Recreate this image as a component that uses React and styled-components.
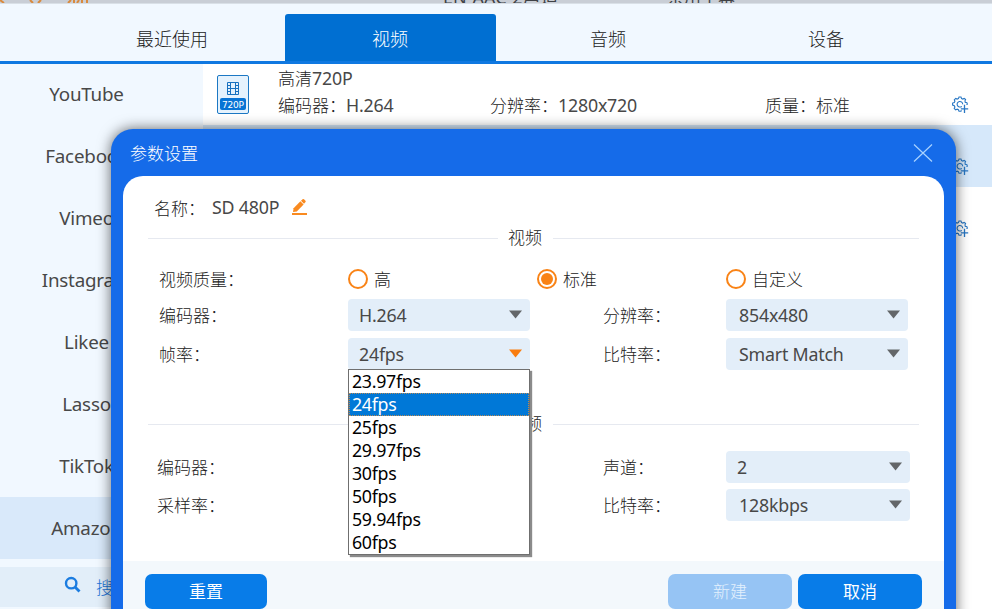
import React, { useState } from 'react';
import styled, { createGlobalStyle } from 'styled-components';

const GlobalStyle = createGlobalStyle`
  * {
    box-sizing: border-box;
  }

  body {
    margin: 0;
    font-family: 'Noto Sans', 'Noto Sans CJK SC', sans-serif;
    font-size: 17px;
    color: #484848;
  }

  button {
    font-family: inherit;
    border: none;
    padding: 0;
  }
`;

const Page = styled.div`
  position: relative;
  width: 992px;
  height: 609px;
  overflow: hidden;
  display: flex;
  flex-direction: column;
  background: #fff;
`;

const BackStrip = styled.div`
  display: flex;
  align-items: flex-end;
  height: 4px;
  overflow: hidden;
  background: #c9ced6;
  border-bottom: 1px solid #d9e0e7;
  color: #3f4246;
  flex-shrink: 0;

  svg {
    width: 443px;
    height: 3px;
    flex-shrink: 0;
  }
`;

const StripText = styled.span`
  width: ${props => props.$width}px;
  height: 3px;
  display: flex;
  align-items: flex-end;
  font-size: ${props => props.$size || 17}px;
  line-height: 12px;
  white-space: nowrap;
`;

const TabBar = styled.nav`
  display: grid;
  grid-template-columns: repeat(4, 218px);
  height: 60px;
  padding: 10px 0 0 63px;
  background: #f1f8ff;
  border-bottom: 3px solid #0f78e1;
  flex-shrink: 0;
`;

const Tab = styled.button`
  margin: 0 3px 0 4px;
  padding: 2px 1px 0 0;
  border-radius: 3px 3px 0 0;
  background: ${props => (props.$active ? '#006fd2' : 'transparent')};
  color: ${props => (props.$active ? '#fff' : '#222')};
  font-size: 18px;
  font-weight: 300;
  line-height: 20px;
`;

const Main = styled.div`
  display: flex;
  flex: 1;
  min-height: 0;
`;

const Sidebar = styled.aside`
  width: 203px;
  background: #f1f8ff;
  flex-shrink: 0;
`;

const SideItem = styled.div`
  display: flex;
  align-items: center;
  justify-content: center;
  height: 62px;
  padding: 0 30px 0 0;
  font-size: 18.8px;
  letter-spacing: -0.2px;
  line-height: 26px;
  background: ${props => (props.$active ? '#d9e9fa' : 'transparent')};

  &:first-child {
    height: 61px;
    padding-bottom: 1px;
  }
`;

const SearchBox = styled.div`
  display: flex;
  align-items: center;
  gap: 15px;
  height: 40px;
  margin-top: 8px;
  padding: 0 0 1px 64px;
  background: #e2eef9;
  color: #1b74d8;
  font-weight: 300;

  svg {
    margin-top: -4px;
  }
`;

const Formats = styled.div`
  flex: 1;
`;

const FormatRow = styled.div`
  display: flex;
  height: ${props => props.$height || 62}px;
  padding-left: 14px;
  background: ${props => (props.$active ? '#d6e8fa' : '#fff')};
`;

const FormatIcon = styled.svg`
  width: 32px;
  height: 39px;
  margin: 11px 29px 0 0;
`;

const FormatInfo = styled.div`
  width: 673px;
  padding-top: 1px;
  color: #222;
  font-weight: 300;
  line-height: 27px;
`;

const FormatDetails = styled.div`
  display: grid;
  grid-template-columns: 212px 275px 186px;
`;

const Latin = styled.span`
  color: #484848;
  font-size: 17.8px;
  font-weight: 400;
  letter-spacing: -0.2px;
  line-height: 20px;
`;

const GearSlot = styled.div`
  padding-top: ${props => props.$top}px;
`;

const Dialog = styled.section`
  position: absolute;
  left: 111px;
  top: 129px;
  width: 845px;
  height: 512px;
  padding: 0 12px 12px;
  border-radius: 22px;
  background: #156be9;
  box-shadow: 0 0 14px rgba(0, 0, 0, 0.6);
`;

const DialogHeader = styled.header`
  display: flex;
  align-items: center;
  justify-content: space-between;
  height: 47px;
  padding: 0 11px 0 7px;
  color: #fff;
  font-weight: 300;

  span {
    padding-bottom: 1px;
  }
`;

const DialogBody = styled.div`
  display: flex;
  flex-direction: column;
  height: 453px;
  padding-top: 10px;
  border-radius: 20px;
  overflow: hidden;
  background: #fff;
`;

const NameRow = styled.div`
  display: flex;
  align-items: center;
  height: 44px;
  padding: 0 0 2px 31px;

  svg {
    margin-left: 12px;
  }
`;

const NameLabel = styled.span`
  width: 58px;
  color: #222;
  font-weight: 300;
`;

const Divider = styled.div`
  display: flex;
  align-items: center;
  height: 16px;
  margin: ${props => props.$top || 0}px 25px 0;
  color: #222;
  font-weight: 300;
  line-height: 16px;

  &::before,
  &::after {
    content: '';
    width: 350px;
    height: 1px;
    margin-right: 10px;
    background: #e6e9f0;
  }

  &::after {
    flex: 1;
    margin: 0 0 0 11px;
  }
`;

const QualityRow = styled.div`
  display: grid;
  grid-template-columns: repeat(4, 189px);
  align-items: center;
  height: 30px;
  margin-top: 18px;
  padding-left: 36px;
`;

const Label = styled.span`
  padding-bottom: 2px;
  color: #222;
  font-weight: 300;
  white-space: nowrap;
`;

const RadioOption = styled.label`
  display: flex;
  align-items: center;
  gap: 6px;
  color: #222;
  font-weight: 300;
`;

const RadioMark = styled.span`
  display: flex;
  align-items: center;
  justify-content: center;
  width: 20px;
  height: 20px;
  border: 2px solid #f98316;
  border-radius: 50%;

  &::after {
    content: '';
    width: 12px;
    height: 12px;
    border-radius: 50%;
    background: ${props => (props.$checked ? '#f98316' : 'transparent')};
  }
`;

const RadioText = styled.span`
  padding-bottom: 1px;
`;

const FieldGrid = styled.div`
  display: grid;
  grid-template-columns: 189px 255px 123px ${props => props.$last}px;
  grid-auto-rows: 32px;
  row-gap: ${props => props.$gap}px;
  align-items: center;
  margin-top: ${props => props.$top}px;
  padding-left: 36px;

  ${Label}:nth-child(4n + 1) {
    margin-left: ${props => props.$shift || 0}px;
  }
`;

const SelectWrap = styled.div`
  position: relative;
  width: ${props => props.$width || 182}px;
`;

const SelectBox = styled.div`
  display: flex;
  align-items: center;
  justify-content: space-between;
  height: 32px;
  padding: 0 8px 1px ${props => props.$indent || 11}px;
  border-radius: 4px;
  background: #e3eef9;

  svg {
    color: ${props => (props.$open ? '#f97c0e' : '#636669')};
  }
`;

const Menu = styled.ul`
  position: absolute;
  z-index: 1;
  top: 31px;
  left: 0;
  width: 182px;
  margin: 0;
  padding: 0;
  border: 1px solid #6f6f6f;
  background: #fff;
  box-shadow: 2px 2px 1px #8b8b8b;
  list-style: none;
`;

const MenuItem = styled.li`
  height: 23px;
  padding-left: ${props => (props.$active ? 2 : 3)}px;
  border: ${props => (props.$active ? '1px dotted #b98a55' : 'none')};
  background: ${props => (props.$active ? '#0078d7' : '#fff')};
  color: ${props => (props.$active ? '#fff' : '#000')};
  font-size: 17.8px;
  letter-spacing: -0.3px;
  line-height: ${props => (props.$active ? 21 : 23)}px;
`;

const Footer = styled.footer`
  display: flex;
  gap: 6px;
  flex: 1;
  margin-top: 40px;
  padding: 13px 22px 0;
  background: #f3f8fc;
`;

const Button = styled.button`
  width: ${props => props.$width}px;
  height: 35px;
  padding-bottom: 2px;
  margin-right: ${props => (props.$first ? 'auto' : '0')};
  border-radius: 7px;
  background: ${props => (props.$disabled ? '#96c4f4' : '#087ce8')};
  color: ${props => (props.$disabled ? '#e4f1fd' : '#fff')};
  font-size: 17px;
  font-weight: ${props => (props.$disabled ? 300 : 400)};
`;

const TABS = ['最近使用', '视频', '音频', '设备'];
const SITES = ['YouTube', 'Facebook', 'Vimeo', 'Instagram', 'Likee', 'Lasso', 'TikTok', 'Amazon'];
const RATES = ['23.97fps', '24fps', '25fps', '29.97fps', '30fps', '50fps', '59.94fps', '60fps'];
const QUALITIES = ['高', '标准', '自定义'];

function GearIcon() {
  return (
    <svg width="18" height="18" viewBox="0 0 18 18" fill="none" stroke="#2877c4" strokeWidth="1.1">
      <path d="M15.4 8.6L16.4 8.2 15.9 6.6 14.2 6.2 14 4.9 14.6 3.5 13.2 2.4 11.8 3.1 10.6 2.6 10 1H8L7.4 2.6 6.1 3.1 4.7 2.4 3.3 3.8 3.9 5.2 3.3 6.5 1.6 7.1V9.1L3.3 9.7 3.9 11 3.2 12.5 4.6 13.9 6.1 13.2 7.4 13.7 8 15.3H10L10.4 14.2" />
      <path d="M10.8 10.3A2.8 2.8 0 1 1 11.7 8.4" />
      <path d="M13.5 8.8V17M9.8 12.8H17.2" strokeWidth="1.3" />
    </svg>
  );
}

function VideoIcon() {
  return (
    <FormatIcon viewBox="0 0 32 39" fill="none">
      <rect x="0.5" y="0.5" width="31" height="38" rx="1.5" fill="#e5f2fd" stroke="#1c78c4" />
      <path d="M10.5 7.5H21.5V19.5H10.5ZM13.5 7V20M18.5 7V20M13.5 13.5H18.5M10 10.5H13M10 13.5H13M10 16.5H13M19 10.5H22M19 13.5H22M19 16.5H22" stroke="#1871bf" />
      <rect x="3" y="23" width="26" height="12" rx="2" fill="#0874d5" />
      <text x="16" y="32.5" textAnchor="middle" fill="#fff" fontFamily="DejaVu Sans" fontSize="9" textLength="22">720P</text>
    </FormatIcon>
  );
}

function CloseIcon() {
  return (
    <svg width="20" height="20" viewBox="0 0 20 20" stroke="#a9d3ff" strokeWidth="1.2">
      <path d="M1 1.5L19 18.5M19 1.5L1 18.5" />
    </svg>
  );
}

function PencilIcon() {
  return (
    <svg width="17" height="18" viewBox="0 0 17 18" fill="#f98a20">
      <path d="M2 14L2.6 10.3 9.4 3.3 12.6 6.5 5.8 13.4Z" />
      <path d="M10 2.8L11.6 1.2Q12.3.6 13 1.2L14.5 2.7Q15.1 3.3 14.5 4L13 5.8Z" />
      <rect x="1" y="15" width="15" height="2" />
    </svg>
  );
}

function Select({ value, options, open, width, indent, onSelect }) {
  return (
    <SelectWrap $width={width}>
      <SelectBox $open={open} $indent={indent}>
        <Latin>{value}</Latin>
        <svg width="13" height="9" viewBox="0 0 13 9" fill="currentColor">
          <path d="M0 .5H13L6.5 8.5Z" />
        </svg>
      </SelectBox>
      {open && (
        <Menu>
          {options.map(option => (
            <MenuItem key={option} $active={option === value} onClick={() => onSelect(option)}>
              {option}
            </MenuItem>
          ))}
        </Menu>
      )}
    </SelectWrap>
  );
}

function SettingsDialog() {
  const [quality, setQuality] = useState('标准');
  const [rate, setRate] = useState('24fps');

  return (
    <Dialog>
      <DialogHeader>
        <span>参数设置</span>
        <CloseIcon />
      </DialogHeader>
      <DialogBody>
        <NameRow>
          <NameLabel>名称：</NameLabel>
          <Latin>SD 480P</Latin>
          <PencilIcon />
        </NameRow>

        <Divider>视频</Divider>
        <QualityRow>
          <Label>视频质量：</Label>
          {QUALITIES.map(name => (
            <RadioOption key={name} onClick={() => setQuality(name)}>
              <RadioMark $checked={name === quality} />
              <RadioText>{name}</RadioText>
            </RadioOption>
          ))}
        </QualityRow>
        <FieldGrid $last={182} $gap={7} $top={5}>
          <Label>编码器：</Label>
          <Select value="H.264" />
          <Label>分辨率：</Label>
          <Select value="854x480" indent={13} />
          <Label>帧率：</Label>
          <Select value={rate} options={RATES} open onSelect={setRate} />
          <Label>比特率：</Label>
          <Select value="Smart Match" indent={13} />
        </FieldGrid>

        <Divider $top={46}>音频</Divider>
        <FieldGrid $last={184} $gap={6} $top={19} $shift={-2}>
          <Label>编码器：</Label>
          <Select value="" />
          <Label>声道：</Label>
          <Select value="2" width={184} />
          <Label>采样率：</Label>
          <Select value="" />
          <Label>比特率：</Label>
          <Select value="128kbps" width={184} indent={13} />
        </FieldGrid>

        <Footer>
          <Button $width={122} $first>重置</Button>
          <Button $width={124} $disabled>新建</Button>
          <Button $width={124}>取消</Button>
        </Footer>
      </DialogBody>
    </Dialog>
  );
}

function App() {
  const [tab, setTab] = useState('视频');

  return (
    <>
      <GlobalStyle />
      <Page>
        <BackStrip>
          <svg viewBox="0 0 443 3" fill="none" stroke="#d98a3e" strokeWidth="2">
            <path d="M0 0L4 3M30 0L33 3M41 0L38 3M71 0L68 3M74 0V3M79 0L77 3M82 0V3M87 0V3" />
          </svg>
          <StripText $width={224} $size={18}>EN-AAC-2声道</StripText>
          <StripText $width={200}>禁用字幕</StripText>
        </BackStrip>
        <TabBar>
          {TABS.map(name => (
            <Tab key={name} $active={name === tab} onClick={() => setTab(name)}>
              {name}
            </Tab>
          ))}
        </TabBar>
        <Main>
          <Sidebar>
            {SITES.map(site => (
              <SideItem key={site} $active={site === 'Amazon'}>{site}</SideItem>
            ))}
            <SearchBox>
              <svg width="17" height="17" viewBox="0 0 17 17" fill="none" stroke="#1b7ce0" strokeWidth="2.4">
                <circle cx="7.2" cy="7.2" r="5.2" />
                <path d="M11 11L15.5 15.5" strokeWidth="2.8" />
              </svg>
              搜索
            </SearchBox>
          </Sidebar>
          <Formats>
            <FormatRow $height={61}>
              <VideoIcon />
              <FormatInfo>
                <div>高清<Latin>720P</Latin></div>
                <FormatDetails>
                  <span>编码器：<Latin>H.264</Latin></span>
                  <span>分辨率：<Latin>1280x720</Latin></span>
                  <span>质量：标准</span>
                </FormatDetails>
              </FormatInfo>
              <GearSlot $top={32}><GearIcon /></GearSlot>
            </FormatRow>
            <FormatRow $active>
              <FormatIcon />
              <FormatInfo />
              <GearSlot $top={33}><GearIcon /></GearSlot>
            </FormatRow>
            <FormatRow>
              <FormatIcon />
              <FormatInfo />
              <GearSlot $top={33}><GearIcon /></GearSlot>
            </FormatRow>
          </Formats>
        </Main>
        <SettingsDialog />
      </Page>
    </>
  );
}

export default App;
